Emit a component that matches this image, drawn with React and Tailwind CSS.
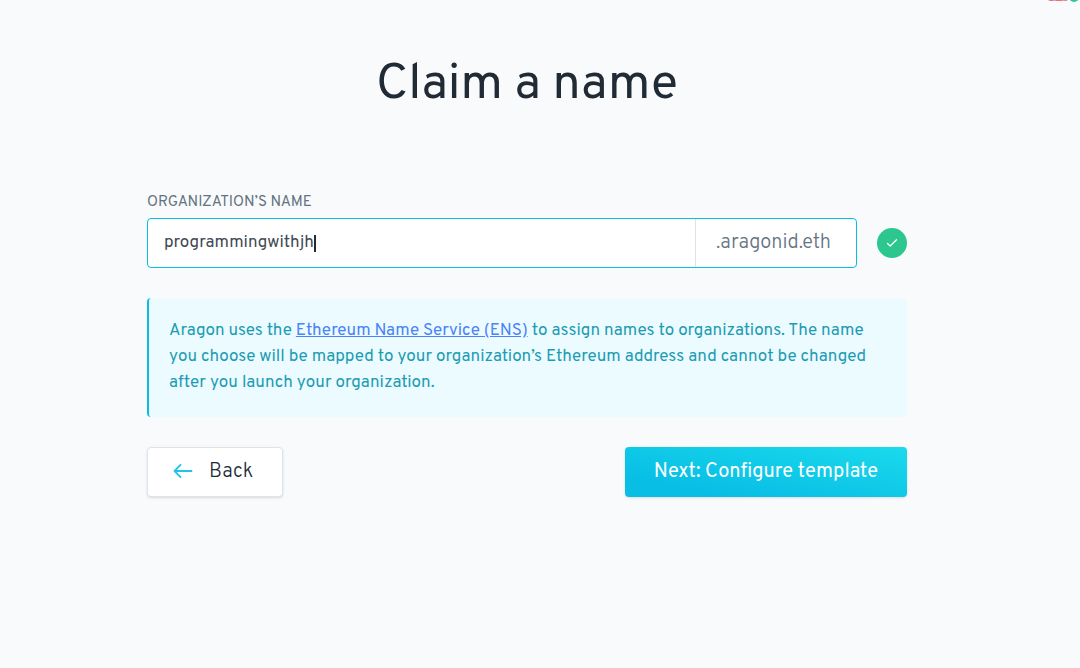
export default function App() {
  return (
    <div className="relative min-h-screen overflow-hidden bg-[#f9fafc] font-['Overpass','Open_Sans',sans-serif] text-[#212b36]">
      <div className="absolute right-0 top-0" aria-hidden="true">
        <svg width="32" height="2" viewBox="0 0 32 2">
          <path d="M0 0h20l-2 1H2z" fill="#ff6969" />
          <path d="M5 0h3v1H5zM14 0h3v1h-3z" fill="#c9a0dc" />
          <circle cx="26" cy="-3" r="5" fill="#2cc68f" />
        </svg>
      </div>
      <main className="mr-[26px] flex justify-center px-5">
        <div className="w-full max-w-[760px]">
          <h1 className="pt-[51px] text-center text-[50px] leading-[70px]">Claim a name</h1>
          <form className="mt-[71px]">
            <label htmlFor="org" className="block text-[15px] leading-[22px] text-[#637381]">ORGANIZATION’S NAME</label>
            <div className="mt-1 flex items-center gap-5">
              <div className="flex h-[50px] flex-1 rounded border border-[#08bee5] bg-white">
                <div className="flex min-w-0 flex-1 items-center pl-4">
                  <input id="org" defaultValue="programmingwithjh" className="h-full max-w-full text-[17px] text-[#414a54] caret-transparent outline-none field-sizing-content" />
                  <span className="h-[17px] w-[2px] bg-[#212b36]" aria-hidden="true" />
                </div>
                <span className="flex items-center border-l border-[#dde4e9] pl-5 pr-[25px] text-[20px] font-light text-[#637381]">.aragonid.eth</span>
              </div>
              <span className="flex size-[30px] items-center justify-center rounded-full bg-[#2cc68f]">
                <svg width="12" height="10" viewBox="0 0 12 10" fill="none" stroke="white" strokeWidth="1.3" strokeLinecap="round" strokeLinejoin="round"><path d="M1.5 5.5 4.2 8 10.5 1.8" /></svg>
              </span>
            </div>
            <p className="mt-[30px] rounded border-l-2 border-[#08bee5] bg-[#ebfbff] px-5 pb-[21px] pt-5 text-[17px] leading-[26px] text-[#1c9bb3]">Aragon uses the <a href="#ens" className="text-[#4a83f7] underline">Ethereum Name Service (ENS)</a> to assign names to organizations. The name you choose will be mapped to your organization’s Ethereum address and cannot be changed after you launch your organization.</p>
            <div className="mt-[30px] flex justify-between">
              <button type="button" className="flex h-[50px] items-center gap-4 rounded border border-[#dde4e9] bg-white pl-[25px] pr-[29px] text-[20px] font-light shadow-sm">
                <svg width="20" height="16" viewBox="0 0 20 16" fill="none" stroke="#21c4e8" strokeWidth="1.8" strokeLinecap="round" strokeLinejoin="round"><path d="M18.5 7H1.5M7.5 .9 1.5 7l6 6.1" /></svg>
                <span>Back</span>
              </button>
              <button type="button" className="h-[50px] rounded bg-[linear-gradient(190deg,#1adaec,#08bee5_80%)] px-[29px] text-[20px] text-white shadow-sm">Next: Configure template</button>
            </div>
          </form>
        </div>
      </main>
    </div>
  );
}
